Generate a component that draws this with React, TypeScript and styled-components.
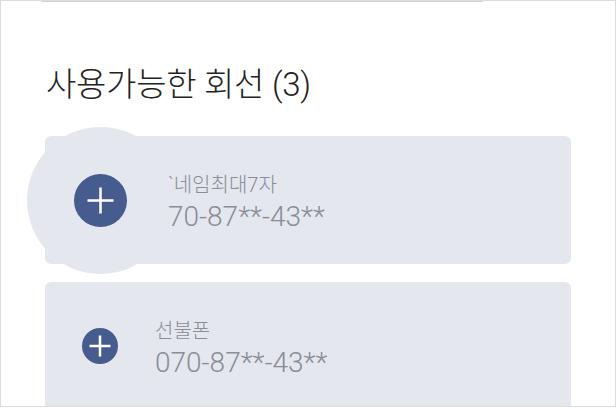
import React from "react";
import styled, { createGlobalStyle } from "styled-components";

const Global = createGlobalStyle`
  html, body { margin: 0; padding: 0; background: #fff; overflow: hidden; }
  * { box-sizing: border-box; }
`;

const Frame = styled.div`
  position: relative;
  z-index: 0;
  width: 616px;
  height: 407px;
  border: 1px solid #dcdcdc;
  background: #fff;
  overflow: hidden;
  display: flex;
  flex-direction: column;
  font-family: "Roboto", "Noto Sans CJK KR", sans-serif;
`;

const PrevCardEdge = styled.div`
  margin-left: 40px;
  width: 442px;
  height: 2px;
  border-top: 1px solid #cfcfcf;
  background: #e6e6e6;
  border-radius: 0 0 3px 3px;
`;

const Title = styled.h2`
  margin: 64px 0 0 45px;
  font-size: 33px;
  line-height: 38px;
  font-weight: 300;
  color: #222;
  letter-spacing: -0.3px;
`;

const List = styled.div`
  margin: 32px 44px 0 44px;
  display: flex;
  flex-direction: column;
  gap: 18px;
`;

const Card = styled.div`
  height: 128px;
  flex-shrink: 0;
  border-radius: 6px;
  background: #e4e7ed;
  display: flex;
  align-items: center;
`;

const IconCell = styled.div`
  position: relative;
  width: 110px;
  flex-shrink: 0;
  display: flex;
  align-items: center;
  justify-content: center;
`;

const Ripple = styled.span`
  position: absolute;
  z-index: -1;
  left: 50%;
  top: 50%;
  width: 147px;
  height: 147px;
  margin: -73.5px 0 0 -73.5px;
  border-radius: 50%;
  background: #e4e7ed;
`;

const PlusButton = styled.span<{ $size: number }>`
  width: ${(p) => p.$size}px;
  height: ${(p) => p.$size}px;
  border-radius: 50%;
  background: #475c8e;
  display: flex;
  align-items: center;
  justify-content: center;
`;

const Info = styled.div<{ $active?: boolean }>`
  margin-left: ${(p) => (p.$active ? 13 : 0)}px;
  margin-top: 6px;
  display: flex;
  flex-direction: column;
  color: #878d9a;
  font-weight: 300;
`;

const Name = styled.div`
  font-size: 20px;
  line-height: 24px;
`;

const Number = styled.div`
  font-size: 28px;
  line-height: 34px;
  margin-top: 3px;
`;

const Plus = ({ size, arm }: { size: number; arm: number }) => {
  const c = size / 2;
  return (
    <svg width={size} height={size} viewBox={`0 0 ${size} ${size}`}>
      <path
        d={`M${c - arm} ${c}H${c + arm}M${c} ${c - arm}V${c + arm}`}
        stroke="#fff"
        strokeWidth={2.5}
        fill="none"
      />
    </svg>
  );
};

export default function App() {
  return (
    <>
      <Global />
      <Frame>
        <PrevCardEdge />
        <Title>사용가능한 회선 (3)</Title>
        <List>
          <Card>
            <IconCell>
              <Ripple />
              <PlusButton $size={53}>
                <Plus size={53} arm={13} />
              </PlusButton>
            </IconCell>
            <Info $active>
              <Name>`네임최대7자</Name>
              <Number>70-87**-43**</Number>
            </Info>
          </Card>
          <Card>
            <IconCell>
              <PlusButton $size={36}>
                <Plus size={36} arm={10.5} />
              </PlusButton>
            </IconCell>
            <Info>
              <Name>선불폰</Name>
              <Number>070-87**-43**</Number>
            </Info>
          </Card>
        </List>
      </Frame>
    </>
  );
}
